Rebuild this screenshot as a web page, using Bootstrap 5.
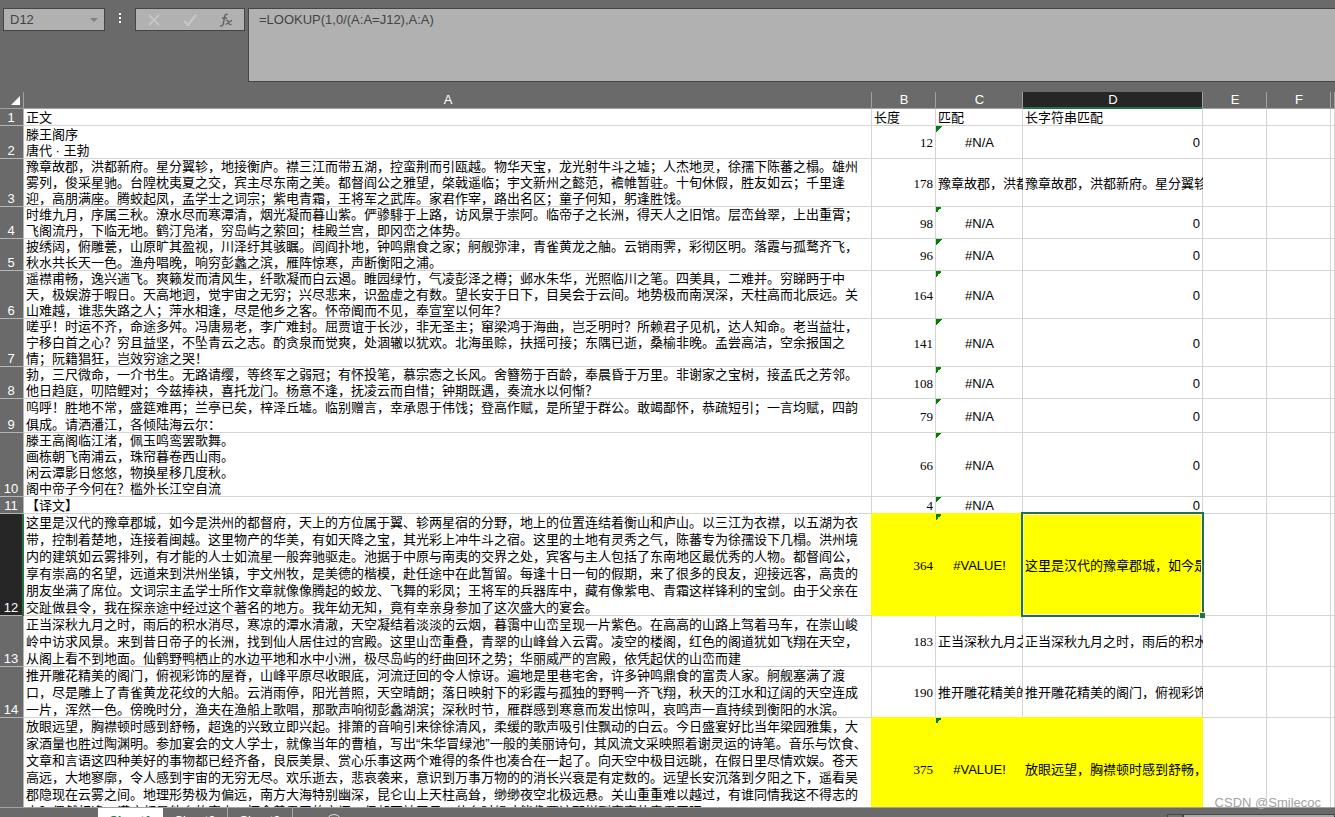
<!DOCTYPE html>
<html lang="zh-CN">
<head>
<meta charset="utf-8">
<meta name="viewport" content="width=device-width, initial-scale=1">
<title>Sheet1</title>
<link rel="stylesheet" href="https://cdn.jsdelivr.net/npm/bootstrap@5.3.0/dist/css/bootstrap.min.css">
<script src="https://cdn.jsdelivr.net/npm/bootstrap@5.3.0/dist/js/bootstrap.bundle.min.js"></script>
<style>
:root { --chrome:#6a6a6a; --field:#b1b1b1; --edge:#454545; --rule:#d4d4d4; --pick:#217346; }
body { background:var(--chrome); font:13px/17px "Liberation Sans","Noto Sans CJK SC",sans-serif; color:#000; }
.fx-bar { padding:8px 0 10px 3px; gap:4px; }
.fx-box { background:var(--field); border:1px solid var(--edge); height:23px; color:#444; }
.name-box { width:102px; }
.name-box input { width:70px; background:none; border:0; padding:0 0 0 6px; color:#444; outline:0; }
.name-box button, .fx-tools button { border:0; background:none; padding:0; line-height:0; }
.fx-grip { width:22px; height:23px; }
.fx-tools { width:110px; }
.fx-input { height:74px; resize:none; padding:2px 10px; border-radius:0; outline:0; border-right:0; margin-left:-1px; }
.sheet-view { background:#fff; min-height:0; }
.grid { width:100%; table-layout:fixed; border-collapse:separate; border-spacing:0; }
.grid th { background:var(--chrome); color:#fff; font-weight:400; text-align:center; padding:0; }
.grid thead th { height:17px; line-height:15px; vertical-align:top; box-shadow:inset -1px -1px 0 #a2a2a2; }
.grid thead th:first-child { vertical-align:middle; }
.grid thead th.picked { background:#262626; box-shadow:inset -1px 0 0 #a2a2a2, inset 0 -2px 0 var(--pick); }
.grid tbody th { vertical-align:bottom; box-shadow:inset -1px -1px 0 #b5b5b5; padding-right:2px; }
.grid tbody th.picked { background:#262626; box-shadow:inset -2px 0 0 var(--pick), inset 0 -1px 0 #b5b5b5; }
.grid td { padding:0 0 0 2px; white-space:nowrap; vertical-align:middle; box-shadow:inset -1px -1px 0 var(--rule); }
.grid .song { line-height:16px; }
.grid .num { text-align:right; font-family:"Liberation Serif",serif; padding-right:3px; }
.grid .zero { text-align:right; padding-right:3px; }
.grid .flag { text-align:center; padding-right:2px; background-image:linear-gradient(135deg,#008000 50%,transparent 50%); background-size:6px 6px; background-repeat:no-repeat; }
.grid .lit { background-color:#ff0; box-shadow:-1px -1px 0 #ff0; position:relative; }
.clip { overflow:hidden; }
.r17 { height:17px; } .r33 { height:33px; } .r32 { height:32px; } .r34 { height:34px; }
.r48 { height:48px; } .r51 { height:51px; } .r64 { height:64px; } .r102 { height:102px; }
.pick-frame { position:absolute; inset:-2px -1px -1px -2px; border:2px solid var(--pick); box-shadow:inset 0 0 0 1px #fff; }
.pick-frame::after { content:""; position:absolute; right:-3px; bottom:-3px; width:6px; height:6px; background:var(--pick); border:1px solid #fff; border-width:1px 0 0 1px; }
.grid td.active-cell { z-index:2; }
.tab-strip { height:10px; border-top:1px solid #a2a2a2; padding-left:98px; }
.tab-strip button { border:0; background:none; color:#fff; width:65px; height:24px; padding:0; }
.tab-strip .sheet-tab { border-right:1px solid #a2a2a2; }
.tab-strip .sheet-tab.open { background:#fff; color:var(--pick); font-weight:700; border:0; }
.tab-strip .add-tab { padding-top:4px; }
.h-scroll { margin-top:6px; height:18px; width:168px; }
.h-scroll span { border:1px solid var(--edge); background:#a8a8a8; }
.h-scroll .thumb-stop { width:16px; background:#777; }
.watermark { position:absolute; right:14px; bottom:5px; color:#a3a3a3; z-index:3; font-size:13px; line-height:18px; }
</style>
</head>
<body class="vh-100 d-flex flex-column overflow-hidden position-relative">
<header class="fx-bar d-flex align-items-start">
  <div class="fx-box name-box d-flex align-items-center justify-content-between">
    <input type="text" value="D12" aria-label="名称框">
    <button type="button" class="pe-1" aria-label="名称列表"><svg width="12" height="8" viewBox="0 0 12 8"><path d="M2 2h8L6 6z" fill="#808080"/></svg></button>
  </div>
  <svg class="fx-grip" viewBox="0 0 22 23" aria-hidden="true"><path d="M10 5h2v2h-2zM10 9h2v2h-2zM10 13h2v2h-2z" fill="#fff"/></svg>
  <div class="fx-box fx-tools d-flex align-items-center justify-content-around">
    <button type="button" aria-label="取消"><svg width="14" height="14" viewBox="0 0 14 14"><path d="M2 2l10 10M12 2L2 12" stroke="#c6c6c6" stroke-width="1.8"/></svg></button>
    <button type="button" aria-label="输入"><svg width="16" height="14" viewBox="0 0 16 14"><path d="M2 8l4 4L14 2" fill="none" stroke="#c6c6c6" stroke-width="2.4"/></svg></button>
    <button type="button" aria-label="插入函数"><svg width="14" height="14" viewBox="0 0 14 14" fill="none" stroke="#666"><path d="M8.5 1.8C6.8.4 6 1.8 5.6 4L4.4 10.200C4 12.500 3 13.500 1 12.600M3 5h5" stroke-width="1.500"/><path d="M7 7.500c2-1 2 1 2.600 2.500s1 2 2.900 1.500M13 7.500c-2 0-4 3.500-6.500 4" stroke-width="1.300"/></svg></button>
  </div>
  <textarea class="fx-box fx-input flex-grow-1" aria-label="编辑栏" spellcheck="false">=LOOKUP(1,0/(A:A=J12),A:A)</textarea>
</header>
<main class="sheet-view flex-grow-1 overflow-hidden">
<table class="grid">
<colgroup><col style="width:24px"><col><col style="width:64px"><col style="width:87px"><col style="width:180px"><col style="width:64px"><col style="width:64px"><col style="width:4px"></colgroup>
<thead><tr><th><svg class="d-block ms-auto me-1" width="9" height="9" viewBox="0 0 9 9" aria-label="全选"><path d="M9 0v9H0z" fill="#fff"/></svg></th><th>A</th><th>B</th><th>C</th><th class="picked">D</th><th>E</th><th>F</th><th></th></tr></thead>
<tbody>
<tr class="r17"><th>1</th><td class="song">正文</td><td class="song">长度</td><td class="song">匹配</td><td class="song">长字符串匹配</td><td></td><td></td><td></td></tr>
<tr class="r33"><th>2</th><td class="song">滕王阁序<br>唐代 · 王勃</td><td class="num">12</td><td class="flag">#N/A</td><td class="zero">0</td><td></td><td></td><td></td></tr>
<tr class="r48"><th>3</th><td class="song">豫章故郡，洪都新府。星分翼轸，地接衡庐。襟三江而带五湖，控蛮荆而引瓯越。物华天宝，龙光射牛斗之墟；人杰地灵，徐孺下陈蕃之榻。雄州<br>雾列，俊采星驰。台隍枕夷夏之交，宾主尽东南之美。都督阎公之雅望，棨戟遥临；宇文新州之懿范，襜帷暂驻。十旬休假，胜友如云；千里逢<br>迎，高朋满座。腾蛟起凤，孟学士之词宗；紫电青霜，王将军之武库。家君作宰，路出名区；童子何知，躬逢胜饯。</td><td class="num">178</td><td><div class="clip">豫章故郡，洪都</div></td><td><div class="clip">豫章故郡，洪都新府。星分翼轸</div></td><td></td><td></td><td></td></tr>
<tr class="r32"><th>4</th><td class="song">时维九月，序属三秋。潦水尽而寒潭清，烟光凝而暮山紫。俨骖騑于上路，访风景于崇阿。临帝子之长洲，得天人之旧馆。层峦耸翠，上出重霄；<br>飞阁流丹，下临无地。鹤汀凫渚，穷岛屿之萦回；桂殿兰宫，即冈峦之体势。</td><td class="num">98</td><td class="flag">#N/A</td><td class="zero">0</td><td></td><td></td><td></td></tr>
<tr class="r32"><th>5</th><td class="song">披绣闼，俯雕甍，山原旷其盈视，川泽纡其骇瞩。闾阎扑地，钟鸣鼎食之家；舸舰弥津，青雀黄龙之舳。云销雨霁，彩彻区明。落霞与孤鹜齐飞，<br>秋水共长天一色。渔舟唱晚，响穷彭蠡之滨，雁阵惊寒，声断衡阳之浦。</td><td class="num">96</td><td class="flag">#N/A</td><td class="zero">0</td><td></td><td></td><td></td></tr>
<tr class="r48"><th>6</th><td class="song">遥襟甫畅，逸兴遄飞。爽籁发而清风生，纤歌凝而白云遏。睢园绿竹，气凌彭泽之樽；邺水朱华，光照临川之笔。四美具，二难并。穷睇眄于中<br>天，极娱游于暇日。天高地迥，觉宇宙之无穷；兴尽悲来，识盈虚之有数。望长安于日下，目吴会于云间。地势极而南溟深，天柱高而北辰远。关<br>山难越，谁悲失路之人；萍水相逢，尽是他乡之客。怀帝阍而不见，奉宣室以何年？</td><td class="num">164</td><td class="flag">#N/A</td><td class="zero">0</td><td></td><td></td><td></td></tr>
<tr class="r48"><th>7</th><td class="song">嗟乎！时运不齐，命途多舛。冯唐易老，李广难封。屈贾谊于长沙，非无圣主；窜梁鸿于海曲，岂乏明时？所赖君子见机，达人知命。老当益壮，<br>宁移白首之心？穷且益坚，不坠青云之志。酌贪泉而觉爽，处涸辙以犹欢。北海虽赊，扶摇可接；东隅已逝，桑榆非晚。孟尝高洁，空余报国之<br>情；阮籍猖狂，岂效穷途之哭！</td><td class="num">141</td><td class="flag">#N/A</td><td class="zero">0</td><td></td><td></td><td></td></tr>
<tr class="r32"><th>8</th><td class="song">勃，三尺微命，一介书生。无路请缨，等终军之弱冠；有怀投笔，慕宗悫之长风。舍簪笏于百龄，奉晨昏于万里。非谢家之宝树，接孟氏之芳邻。<br>他日趋庭，叨陪鲤对；今兹捧袂，喜托龙门。杨意不逢，抚凌云而自惜；钟期既遇，奏流水以何惭？</td><td class="num">108</td><td class="flag">#N/A</td><td class="zero">0</td><td></td><td></td><td></td></tr>
<tr class="r34"><th>9</th><td>呜呼！胜地不常，盛筵难再；兰亭已矣，梓泽丘墟。临别赠言，幸承恩于伟饯；登高作赋，是所望于群公。敢竭鄙怀，恭疏短引；一言均赋，四韵<br>俱成。请洒潘江，各倾陆海云尔：</td><td class="num">79</td><td class="flag">#N/A</td><td class="zero">0</td><td></td><td></td><td></td></tr>
<tr class="r64"><th>10</th><td class="song">滕王高阁临江渚，佩玉鸣鸾罢歌舞。<br>画栋朝飞南浦云，珠帘暮卷西山雨。<br>闲云潭影日悠悠，物换星移几度秋。<br>阁中帝子今何在？槛外长江空自流</td><td class="num">66</td><td class="flag">#N/A</td><td class="zero">0</td><td></td><td></td><td></td></tr>
<tr class="r17"><th>11</th><td>【译文】</td><td class="num">4</td><td class="flag">#N/A</td><td class="zero">0</td><td></td><td></td><td></td></tr>
<tr class="r102"><th class="picked">12</th><td>这里是汉代的豫章郡城，如今是洪州的都督府，天上的方位属于翼、轸两星宿的分野，地上的位置连结着衡山和庐山。以三江为衣襟，以五湖为衣<br>带，控制着楚地，连接着闽越。这里物产的华美，有如天降之宝，其光彩上冲牛斗之宿。这里的土地有灵秀之气，陈蕃专为徐孺设下几榻。洪州境<br>内的建筑如云雾排列，有才能的人士如流星一般奔驰驱走。池据于中原与南夷的交界之处，宾客与主人包括了东南地区最优秀的人物。都督阎公，<br>享有崇高的名望，远道来到洪州坐镇，宇文州牧，是美德的楷模，赴任途中在此暂留。每逢十日一旬的假期，来了很多的良友，迎接远客，高贵的<br>朋友坐满了席位。文词宗主孟学士所作文章就像像腾起的蛟龙、飞舞的彩凤；王将军的兵器库中，藏有像紫电、青霜这样锋利的宝剑。由于父亲在<br>交趾做县令，我在探亲途中经过这个著名的地方。我年幼无知，竟有幸亲身参加了这次盛大的宴会。</td><td class="num lit">364</td><td class="flag lit">#VALUE!</td><td class="lit active-cell"><div class="clip">这里是汉代的豫章郡城，如今是</div><div class="pick-frame"></div></td><td></td><td></td><td></td></tr>
<tr class="r51"><th>13</th><td>正当深秋九月之时，雨后的积水消尽，寒凉的潭水清澈，天空凝结着淡淡的云烟，暮霭中山峦呈现一片紫色。在高高的山路上驾着马车，在崇山峻<br>岭中访求风景。来到昔日帝子的长洲，找到仙人居住过的宫殿。这里山峦重叠，青翠的山峰耸入云霄。凌空的楼阁，红色的阁道犹如飞翔在天空，<br>从阁上看不到地面。仙鹤野鸭栖止的水边平地和水中小洲，极尽岛屿的纡曲回环之势；华丽威严的宫殿，依凭起伏的山峦而建</td><td class="num">183</td><td><div class="clip">正当深秋九月之</div></td><td><div class="clip">正当深秋九月之时，雨后的积水</div></td><td></td><td></td><td></td></tr>
<tr class="r51"><th>14</th><td>推开雕花精美的阁门，俯视彩饰的屋脊，山峰平原尽收眼底，河流迂回的令人惊讶。遍地是里巷宅舍，许多钟鸣鼎食的富贵人家。舸舰塞满了渡<br>口，尽是雕上了青雀黄龙花纹的大船。云消雨停，阳光普照，天空晴朗；落日映射下的彩霞与孤独的野鸭一齐飞翔，秋天的江水和辽阔的天空连成<br>一片，浑然一色。傍晚时分，渔夫在渔船上歌唱，那歌声响彻彭蠡湖滨；深秋时节，雁群感到寒意而发出惊叫，哀鸣声一直持续到衡阳的水滨。</td><td class="num">190</td><td><div class="clip">推开雕花精美的</div></td><td><div class="clip">推开雕花精美的阁门，俯视彩饰</div></td><td></td><td></td><td></td></tr>
<tr class="r102"><th>15</th><td>放眼远望，胸襟顿时感到舒畅，超逸的兴致立即兴起。排箫的音响引来徐徐清风，柔缓的歌声吸引住飘动的白云。今日盛宴好比当年梁园雅集，大<br>家酒量也胜过陶渊明。参加宴会的文人学士，就像当年的曹植，写出“朱华冒绿池”一般的美丽诗句，其风流文采映照着谢灵运的诗笔。音乐与饮食、<br>文章和言语这四种美好的事物都已经齐备，良辰美景、赏心乐事这两个难得的条件也凑合在一起了。向天空中极目远眺，在假日里尽情欢娱。苍天<br>高远，大地寥廓，令人感到宇宙的无穷无尽。欢乐逝去，悲哀袭来，意识到万事万物的的消长兴衰是有定数的。远望长安沉落到夕阳之下，遥看吴<br>郡隐现在云雾之间。地理形势极为偏远，南方大海特别幽深，昆仑山上天柱高耸，缈缈夜空北极远悬。关山重重难以越过，有谁同情我这不得志的<br>人？偶然相逢，满座都是他乡的客人。怀念着君王的宫门，但却不被召见，什么时候才能像贾谊那样到宣室侍奉君王呢?</td><td class="num lit">375</td><td class="flag lit">#VALUE!</td><td class="lit"><div class="clip">放眼远望，胸襟顿时感到舒畅，</div></td><td></td><td></td><td></td></tr>
</tbody>
</table>
</main>
<footer class="tab-strip d-flex flex-shrink-0 align-items-start overflow-hidden">
  <button type="button" class="sheet-tab open">Sheet1</button>
  <button type="button" class="sheet-tab">Sheet2</button>
  <button type="button" class="sheet-tab">Sheet3</button>
  <button type="button" class="add-tab ms-2" aria-label="新工作表"><svg width="18" height="18" viewBox="0 0 18 18" fill="none" stroke="#ddd"><circle cx="9" cy="9" r="7.500"/><path d="M9 5v8M5 9h8"/></svg></button>
  <div class="h-scroll d-flex ms-auto"><span class="thumb-stop"></span><span class="flex-grow-1"></span></div>
</footer>
<div class="watermark" lang="en">CSDN @Smilecoc</div>
</body>
</html>
